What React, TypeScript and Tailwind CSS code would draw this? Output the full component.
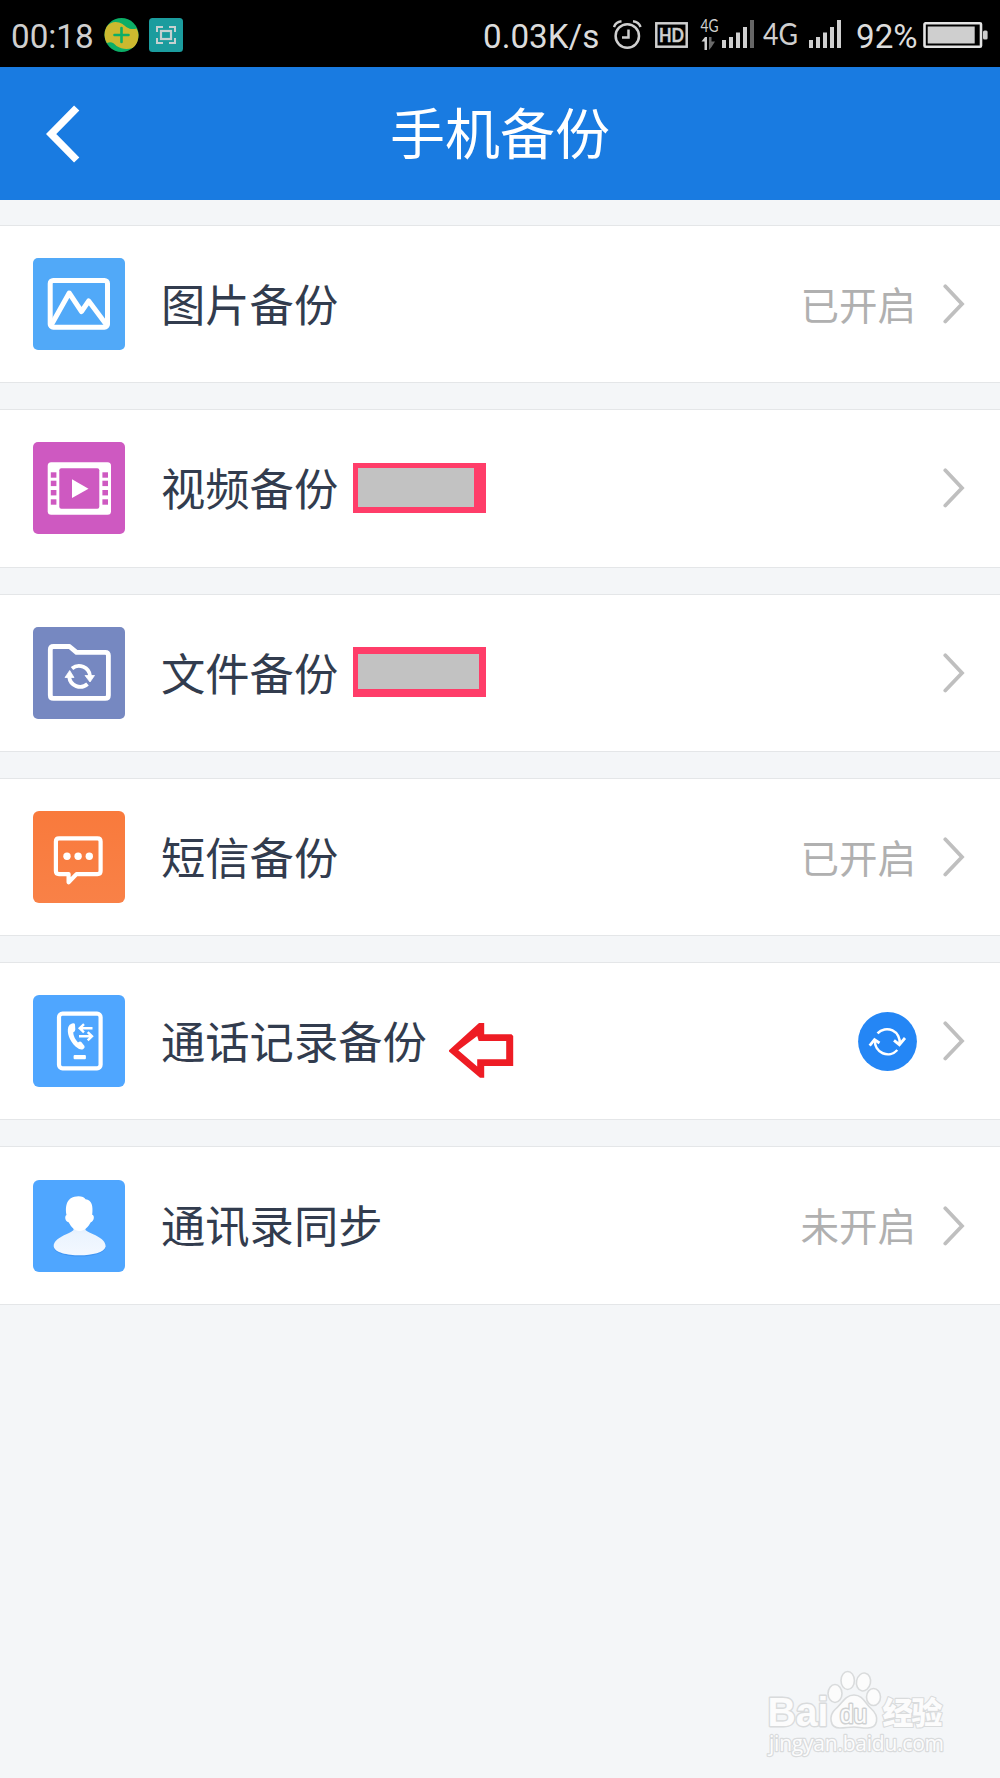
import type { ReactNode } from 'react'

interface BackupItem {
  id: string
  label: string
  icon: ReactNode
  status?: string
  syncing?: boolean
  extra?: ReactNode
}

function SignalBars({ weak = false }: { weak?: boolean }) {
  return (
    <svg width="33" height="29" viewBox="0 0 33 29" fill="#cfcfcf">
      <rect x="0" y="20" width="4" height="8" />
      <rect x="7" y="17" width="4" height="11" />
      <rect x="14" y="12.5" width="4" height="15.5" />
      <rect x="21" y="7" width="4" height="21" />
      <rect x="28" y="0" width="4" height="28" fill={weak ? '#666' : '#cfcfcf'} />
    </svg>
  )
}

function StatusBar() {
  return (
    <div className="flex h-[67px] items-center bg-black pt-[2px] font-[Roboto] text-[33.2px] leading-none whitespace-nowrap text-[#dcdcdc]">
      <span className="ml-[11px] w-[93px] pt-[5px] text-[#cfcfcf]">00:18</span>
      <svg className="w-[35px] shrink-0" height="34" viewBox="0 0 34 34">
        <circle cx="17" cy="17" r="17" fill="#0cae67" />
        <path d="M2 9C6 3 13 3 18 6C22 9 25 12.5 32 10.5Q34 14 34 17C34 23 31.5 28 28 30C22 32 17 31 12 28C9 25 7 23 2.3 25Q0 21 0 17Q0 12.5 2 9Z" fill="#ccb92f" />
        <path d="M17 10v14M10 17h14" stroke="#0cae67" strokeWidth="2.6" strokeLinecap="round" />
      </svg>
      <svg className="ml-[10px] w-[34px] shrink-0" height="34" viewBox="0 0 34 34" fill="none" stroke="#c6d0d0" strokeWidth="2">
        <rect width="34" height="34" rx="3.5" fill="#1b9c9e" stroke="none" />
        <rect x="12" y="13" width="10" height="8" strokeWidth="2.2" />
        <path d="M8 14V9H14M20 9H26V14M26 20V25H20M14 25H8V20" />
      </svg>

      <span className="ml-auto w-[130px] pt-[5px]">0.03K/s</span>
      <svg className="w-[29px] shrink-0" height="30" viewBox="0 0 29 30" fill="none" stroke="#cfcfcf">
        <circle cx="14.3" cy="16" r="11.7" strokeWidth="2.5" />
        <path d="M15.5 9.5V17.5H9" strokeWidth="2.5" />
        <path d="M1 7C2 4 5 1.8 8.5 1.3M20 1.3C23.5 1.8 26.5 4 27.6 7" strokeWidth="2.4" />
      </svg>
      <svg className="ml-[13px] w-[33px] shrink-0" height="26" viewBox="0 0 33 26">
        <rect x="1.3" y="1.3" width="30.4" height="23.4" fill="none" stroke="#cfcfcf" strokeWidth="2.5" />
        <text x="4" y="19.8" fill="#cfcfcf" stroke="#cfcfcf" strokeWidth="0.4" fontFamily="Lato" fontSize="19.5" fontWeight="700" textLength="25" lengthAdjust="spacingAndGlyphs">HD</text>
      </svg>
      <svg className="ml-[12px] w-[22px] shrink-0 overflow-visible" height="32" viewBox="0 0 22 32">
        <text x="0.5" y="13" fill="#cfcfcf" fontFamily="Lato" fontSize="16.5" textLength="18" lengthAdjust="spacingAndGlyphs">4G</text>
        <path d="M1.5 22.5L5 18H7V31H4.5V22.5Z" fill="#cfcfcf" />
        <path d="M9 18H11.5V22.5H15L11.5 28L9 31Z" fill="#6a6a6a" />
      </svg>
      <SignalBars weak />
      <svg className="ml-[8px] w-[37px] shrink-0 overflow-visible" height="28" viewBox="0 0 37 28">
        <text x="0" y="24" fill="#cfcfcf" fontFamily="Lato" fontSize="31" textLength="35" lengthAdjust="spacingAndGlyphs">4G</text>
      </svg>
      <span className="ml-[9px] flex"><SignalBars /></span>
      <span className="ml-[14px] w-[67px] pt-[5px]">92%</span>
      <svg className="mr-[11px] w-[66px] shrink-0" height="26" viewBox="0 0 66 26">
        <rect x="1.5" y="1.3" width="56.5" height="23.4" rx="1" fill="none" stroke="#e4e4e4" strokeWidth="2.6" />
        <rect x="4.7" y="4.5" width="47" height="17" fill="#cfcfcf" />
        <rect x="60" y="8.5" width="4.6" height="9" rx="1.5" fill="#cfcfcf" />
      </svg>
    </div>
  )
}

function PictureIcon() {
  return (
    <svg viewBox="0 0 92 92" fill="none" stroke="#fff" strokeWidth="5" strokeLinejoin="round">
      <rect width="92" height="92" rx="5" fill="#51a9f8" stroke="none" />
      <rect x="17.2" y="22.5" width="57.3" height="46.7" rx="3" />
      <path d="M18 67.5L36.2 35L48.5 53.5L55.7 43L74 67.5" />
    </svg>
  )
}

const FILM_HOLES = [30.3, 38.7, 48, 57.3]

function VideoIcon() {
  return (
    <svg viewBox="0 0 92 92" fill="#ce59c1">
      <rect width="92" height="92" rx="5" />
      <rect x="14.7" y="20.3" width="63.3" height="52.4" rx="3.5" fill="#fff" />
      <rect x="26.3" y="26.3" width="40" height="40.4" rx="2" />
      {FILM_HOLES.map((y) => (
        <g key={y}>
          <rect x="17.8" y={y} width="5.6" height="5.4" />
          <rect x="69.4" y={y} width="5.6" height="5.4" />
        </g>
      ))}
      <path d="M39 37.3L55.5 46.7L39 56Z" fill="#fff" />
    </svg>
  )
}

function FolderIcon() {
  return (
    <svg viewBox="0 0 92 92" fill="none" stroke="#fff" strokeLinejoin="round">
      <rect width="92" height="92" rx="5" fill="#7688c1" stroke="none" />
      <path d="M20.5 19.5H36.5L43.5 25.3H72.2Q75.4 25.3 75.4 28.5V68.2Q75.4 71.4 72.2 71.4H20.5Q17.3 71.4 17.3 68.2V22.7Q17.3 19.5 20.5 19.5Z" strokeWidth="4.8" />
      <path d="M39 41.5A11 11 0 0 1 57 49M36.2 50A11 11 0 0 0 54.5 57" strokeWidth="3.8" />
      <path d="M52 48.5H61.5L57 55Z M32 50.5H41L36.7 43.5Z" fill="#fff" strokeWidth="0.8" />
    </svg>
  )
}

function MessageIcon() {
  return (
    <svg viewBox="0 0 92 92" fill="none">
      <defs>
        <linearGradient id="sms-bg" x1="0" y1="0" x2="0" y2="1">
          <stop offset="0" stopColor="#f97a3c" />
          <stop offset="1" stopColor="#f98147" />
        </linearGradient>
      </defs>
      <rect width="92" height="92" rx="6" fill="url(#sms-bg)" />
      <path
        d="M26 27.4H64.5Q67.6 27.4 67.6 30.5V60Q67.6 63.1 64.5 63.1H43.5L35.6 71.3V63.1H26Q22.9 63.1 22.9 60V30.5Q22.9 27.4 26 27.4Z"
        stroke="#fff"
        strokeWidth="4.2"
        strokeLinejoin="round"
      />
      <g fill="#fff">
        <circle cx="34" cy="45.3" r="3.7" />
        <circle cx="45.1" cy="45.3" r="3.7" />
        <circle cx="56.3" cy="45.3" r="3.7" />
      </g>
    </svg>
  )
}

function CallLogIcon() {
  return (
    <svg viewBox="0 0 92 92" fill="none" stroke="#fff">
      <rect width="92" height="92" rx="6" fill="#4fa6ff" stroke="none" />
      <rect x="26" y="18.7" width="41.6" height="54.6" rx="3.5" strokeWidth="4.2" />
      <path
        d="M39 28.5Q41.5 27.5 42 29.5L42.3 34.5Q42.3 36.5 40.2 37.5Q40.5 42.5 45 47.5Q47 45.8 48.3 47L51.5 51Q52.3 53 50 54.2Q46.5 55.2 42.5 51.5C36.5 45.5 33.6 38 35.3 32Q36.2 29.2 39 28.5Z"
        fill="#fff"
        stroke="none"
      />
      <path d="M59.5 33.3H48M51 29.2L46.7 33.3L51 37.4M46 41.3H57.5M54.7 37.2L59 41.3L54.7 45.4" strokeWidth="2.4" />
      <rect x="40.6" y="60" width="12.3" height="4.2" rx="1" fill="#fff" stroke="none" />
    </svg>
  )
}

function ContactIcon() {
  return (
    <svg viewBox="0 0 92 92">
      <defs>
        <linearGradient id="contact-body" x1="0" y1="0" x2="0" y2="1">
          <stop offset="0" stopColor="#dcebfd" />
          <stop offset="0.3" stopColor="#ebf4fe" />
          <stop offset="1" stopColor="#f3f8ff" />
        </linearGradient>
      </defs>
      <rect width="92" height="92" rx="6" fill="#4fa6ff" />
      <path d="M40.5 45H52.5V50C57 54 72.7 58 72.7 67.5C71.5 73.5 59 76.6 46.7 76.6S21.5 73.5 20.7 67.5C20.7 58 37 54 40.5 50Z" fill="#4196f3" />
      <path d="M40.5 45H52.5V50C57 54 72.7 57 72.7 66.5C71.5 72.5 59 75.3 46.7 75.3S21.5 72.5 20.7 66.5C20.7 57 37 54 40.5 50Z" fill="url(#contact-body)" />
      <path d="M33.5 35C32 26 33.5 16.5 45.5 16.3C49 16.3 51.5 17.5 52.5 19.2C59 19.8 60.2 26 59.2 34.8C62 35.5 61 41.5 57.8 42.2C55.5 46.5 51.5 51 46.5 51S38 46.5 35.6 42.2C32 41.5 31.3 36 33.5 35Z" fill="#fff" />
    </svg>
  )
}

function SyncBadge() {
  return (
    <svg className="mt-[1px] mr-[26px]" width="59" height="59" viewBox="0 0 59 59" fill="none" stroke="#fff" strokeWidth="2.5">
      <circle cx="29.5" cy="29.5" r="29.4" fill="#2486f5" stroke="none" />
      <path d="M19.5 21.4A12.8 12.8 0 0 1 41.6 32M17 28.5A12.8 12.8 0 0 0 39.3 38" />
      <path d="M36 28.3L41.4 32.7L47 26M11.7 33.7L16.5 27.6L21.5 31" strokeWidth="2.8" />
    </svg>
  )
}

function ArrowMark() {
  return (
    <svg className="mt-[17px] ml-[22px]" width="65" height="56" viewBox="0 0 65 56">
      <path
        fill="#ee1c24"
        fillRule="evenodd"
        d="M0 28.3L30 1H35.2V12.3H62.5L64.2 14V44H35.2V55.7H31L0 29.5ZM9.3 28.3L28.2 44.5V37.3H57.2V19H29.7L28.2 14Z"
      />
    </svg>
  )
}

const ITEMS: BackupItem[] = [
  { id: 'picture', label: '图片备份', icon: <PictureIcon />, status: '已开启' },
  {
    id: 'video',
    label: '视频备份',
    icon: <VideoIcon />,
    extra: <span className="ml-[15px] h-[50px] w-[133px] border-t-[5px] border-r-[12px] border-b-[6px] border-l-[5px] border-[#ff3d69] bg-[#c2c2c2]" />,
  },
  {
    id: 'file',
    label: '文件备份',
    icon: <FolderIcon />,
    extra: <span className="-mt-[2px] ml-[15px] h-[50px] w-[133px] border-t-[7px] border-r-[7px] border-b-[8px] border-l-[5px] border-[#ff3d69] bg-[#c2c2c2]" />,
  },
  { id: 'sms', label: '短信备份', icon: <MessageIcon />, status: '已开启' },
  { id: 'call', label: '通话记录备份', icon: <CallLogIcon />, syncing: true, extra: <ArrowMark /> },
  { id: 'contact', label: '通讯录同步', icon: <ContactIcon />, status: '未开启' },
]

function BackupRow({ item }: { item: BackupItem }) {
  return (
    <li className="flex h-[158.3px] items-center border-y border-[#e4e6e8] bg-white pr-[35px] pl-[33px]">
      <span className="h-[92px] w-[92px] shrink-0">{item.icon}</span>
      <span className="ml-[36px] pb-[2px] text-[44.3px] leading-none text-[#323c4e]">{item.label}</span>
      {item.extra}
      <span className="ml-auto flex items-center">
        {item.status && <span className="mr-[27px] pb-[2px] text-[38.5px] leading-none text-[#b0b0b0]">{item.status}</span>}
        {item.syncing && <SyncBadge />}
        <svg width="22" height="40" viewBox="0 0 22 40" fill="none" stroke="#bfbfbf" strokeWidth="3.8" strokeLinecap="round">
          <path d="M2.3 2.3L19 20L2.3 37.5" />
        </svg>
      </span>
    </li>
  )
}

function Watermark() {
  return (
    <svg className="absolute right-[49px] bottom-[16px]" width="186" height="92" viewBox="0 0 186 92" fill="#fcfcfc" stroke="#d9dbdc" strokeWidth="2.8" strokeLinejoin="round">
      <text x="2.5" y="56" fontFamily="Liberation Sans" fontWeight="700" fontSize="40" textLength="61" lengthAdjust="spacingAndGlyphs" paintOrder="stroke">Bai</text>
      <g strokeWidth="1.6">
        <ellipse cx="70" cy="23.5" rx="7" ry="9" />
        <ellipse cx="82.7" cy="10.5" rx="6.7" ry="9" />
        <ellipse cx="98.5" cy="12" rx="7" ry="9" transform="rotate(12 98.5 12)" />
        <ellipse cx="108.5" cy="27" rx="7" ry="8.5" />
        <path d="M89 25C98 25 100 33.5 106 38.5C115 46.5 113 58.5 102 58C96 58 94 57 89 57S80 58 75 58C64 58 64 45.5 70 39.5C77 33.5 80 25 89 25Z" />
      </g>
      <text x="75" y="52.5" fontFamily="Liberation Sans" fontSize="26" textLength="27" lengthAdjust="spacingAndGlyphs" stroke="#cfd1d2" strokeWidth="3" paintOrder="stroke">du</text>
      <text x="117.5" y="54" fontFamily="Noto Sans CJK SC" fontWeight="900" fontSize="31" textLength="60" paintOrder="stroke" strokeWidth="2.2">经验</text>
      <text x="4" y="81" fontFamily="Open Sans" fontSize="21" textLength="175" paintOrder="stroke" strokeWidth="2.4">jingyan.baidu.com</text>
    </svg>
  )
}

export default function App() {
  return (
    <div className="relative h-[1778px] w-[1000px] overflow-hidden bg-[#f4f6f8] font-['Noto_Sans_CJK_SC',sans-serif]">
      <StatusBar />
      <header className="grid h-[133px] grid-cols-[1fr_auto_1fr] items-center bg-[#197be1]">
        <button type="button" className="ml-[46px] w-[34px]" aria-label="返回">
          <svg width="34" height="58" viewBox="0 0 34 58" fill="none" stroke="#fff" strokeWidth="7.4">
            <path d="M30.7 3L5.2 29L30.7 55" />
          </svg>
        </button>
        <h1 className="pb-[6px] text-[55px] leading-none text-white">手机备份</h1>
      </header>
      <ul className="mt-[25px] flex flex-col gap-[26px]">
        {ITEMS.map((item) => (
          <BackupRow key={item.id} item={item} />
        ))}
      </ul>
      <Watermark />
    </div>
  )
}
